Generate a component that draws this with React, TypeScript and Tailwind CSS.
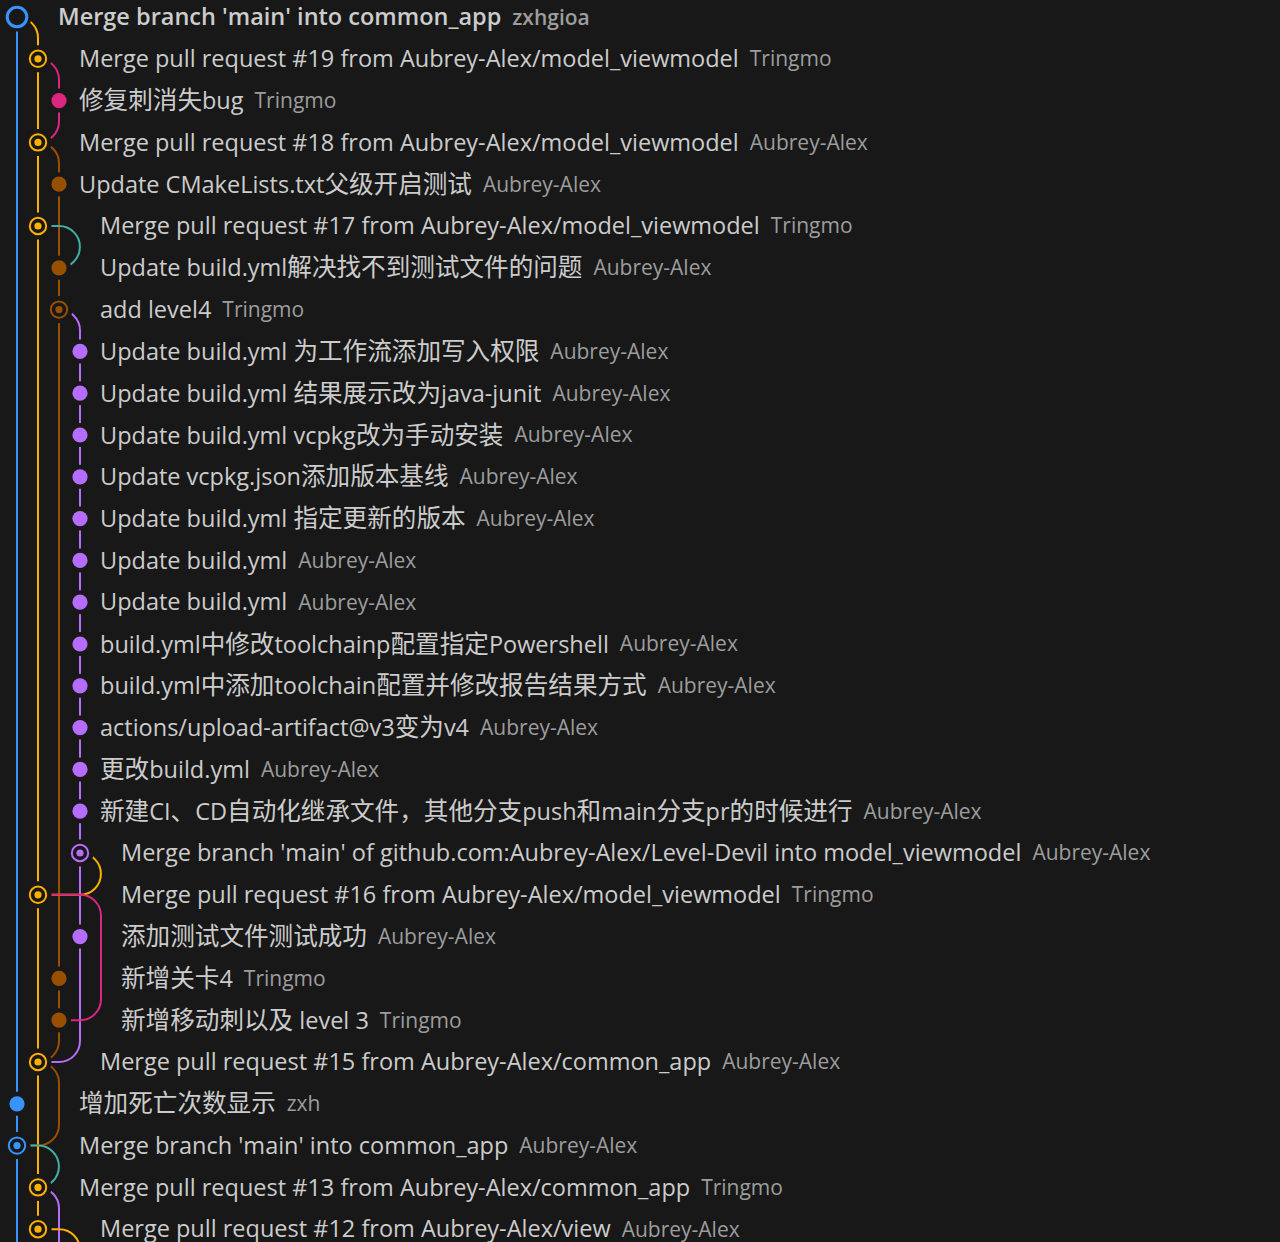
import React from "react";

const BG = "#181818";
const BLUE = "#3794ff";
const YEL = "#ffb000";
const PINK = "#dc267f";
const BROWN = "#994f00";
const TEAL = "#40b0a6";
const PURP = "#b66dff";

const RH = 41.8;
const Y = (i: number) => 17 + RH * i;
const L = [17, 38, 59, 80, 101];
const R = 20.9;

type Row = { msg: string; author: string; pad: number; bold?: boolean };

const rows: Row[] = [
  { msg: "Merge branch 'main' into common_app", author: "zxhgioa", pad: 2, bold: true },
  { msg: "Merge pull request #19 from Aubrey-Alex/model_viewmodel", author: "Tringmo", pad: 3 },
  { msg: "修复刺消失bug", author: "Tringmo", pad: 3 },
  { msg: "Merge pull request #18 from Aubrey-Alex/model_viewmodel", author: "Aubrey-Alex", pad: 3 },
  { msg: "Update CMakeLists.txt父级开启测试", author: "Aubrey-Alex", pad: 3 },
  { msg: "Merge pull request #17 from Aubrey-Alex/model_viewmodel", author: "Tringmo", pad: 4 },
  { msg: "Update build.yml解决找不到测试文件的问题", author: "Aubrey-Alex", pad: 4 },
  { msg: "add level4", author: "Tringmo", pad: 4 },
  { msg: "Update build.yml 为工作流添加写入权限", author: "Aubrey-Alex", pad: 4 },
  { msg: "Update build.yml 结果展示改为java-junit", author: "Aubrey-Alex", pad: 4 },
  { msg: "Update build.yml vcpkg改为手动安装", author: "Aubrey-Alex", pad: 4 },
  { msg: "Update vcpkg.json添加版本基线", author: "Aubrey-Alex", pad: 4 },
  { msg: "Update build.yml 指定更新的版本", author: "Aubrey-Alex", pad: 4 },
  { msg: "Update build.yml", author: "Aubrey-Alex", pad: 4 },
  { msg: "Update build.yml", author: "Aubrey-Alex", pad: 4 },
  { msg: "build.yml中修改toolchainp配置指定Powershell", author: "Aubrey-Alex", pad: 4 },
  { msg: "build.yml中添加toolchain配置并修改报告结果方式", author: "Aubrey-Alex", pad: 4 },
  { msg: "actions/upload-artifact@v3变为v4", author: "Aubrey-Alex", pad: 4 },
  { msg: "更改build.yml", author: "Aubrey-Alex", pad: 4 },
  { msg: "新建CI、CD自动化继承文件，其他分支push和main分支pr的时候进行", author: "Aubrey-Alex", pad: 4 },
  { msg: "Merge branch 'main' of github.com:Aubrey-Alex/Level-Devil into model_viewmodel", author: "Aubrey-Alex", pad: 5 },
  { msg: "Merge pull request #16 from Aubrey-Alex/model_viewmodel", author: "Tringmo", pad: 5 },
  { msg: "添加测试文件测试成功", author: "Aubrey-Alex", pad: 5 },
  { msg: "新增关卡4", author: "Tringmo", pad: 5 },
  { msg: "新增移动刺以及 level 3", author: "Tringmo", pad: 5 },
  { msg: "Merge pull request #15 from Aubrey-Alex/common_app", author: "Aubrey-Alex", pad: 4 },
  { msg: "增加死亡次数显示", author: "zxh", pad: 3 },
  { msg: "Merge branch 'main' into common_app", author: "Aubrey-Alex", pad: 3 },
  { msg: "Merge pull request #13 from Aubrey-Alex/common_app", author: "Tringmo", pad: 3 },
  { msg: "Merge pull request #12 from Aubrey-Alex/view", author: "Aubrey-Alex", pad: 4 },
];

const padClass: Record<number, string> = {
  2: "pl-[58px]",
  3: "pl-[79px]",
  4: "pl-[100px]",
  5: "pl-[121px]",
};

type Node = { row: number; lane: number; color: string; kind: "dot" | "merge" | "head" };

const nodes: Node[] = [
  { row: 0, lane: 0, color: BLUE, kind: "head" },
  { row: 1, lane: 1, color: YEL, kind: "merge" },
  { row: 2, lane: 2, color: PINK, kind: "dot" },
  { row: 3, lane: 1, color: YEL, kind: "merge" },
  { row: 4, lane: 2, color: BROWN, kind: "dot" },
  { row: 5, lane: 1, color: YEL, kind: "merge" },
  { row: 6, lane: 2, color: BROWN, kind: "dot" },
  { row: 7, lane: 2, color: BROWN, kind: "merge" },
  ...[8, 9, 10, 11, 12, 13, 14, 15, 16, 17, 18, 19].map(
    (r): Node => ({ row: r, lane: 3, color: PURP, kind: "dot" })
  ),
  { row: 20, lane: 3, color: PURP, kind: "merge" },
  { row: 21, lane: 1, color: YEL, kind: "merge" },
  { row: 22, lane: 3, color: PURP, kind: "dot" },
  { row: 23, lane: 2, color: BROWN, kind: "dot" },
  { row: 24, lane: 2, color: BROWN, kind: "dot" },
  { row: 25, lane: 1, color: YEL, kind: "merge" },
  { row: 26, lane: 0, color: BLUE, kind: "dot" },
  { row: 27, lane: 0, color: BLUE, kind: "merge" },
  { row: 28, lane: 1, color: YEL, kind: "merge" },
  { row: 29, lane: 1, color: YEL, kind: "merge" },
];

const paths: { d: string; c: string }[] = [
  { d: `M17 17 V1260`, c: BLUE },
  { d: `M17 17 A${R} ${R} 0 0 1 38 ${17 + R} V1260`, c: YEL },
  {
    d: `M38 ${Y(3)} A${R} ${R} 0 0 1 59 ${Y(3) + R} V${Y(25) - R} A${R} ${R} 0 0 1 38 ${Y(25)}`,
    c: BROWN,
  },
  {
    d: `M59 ${Y(7)} A${R} ${R} 0 0 1 80 ${Y(7) + R} V${Y(25) - R} A${R} ${R} 0 0 1 59 ${Y(25)} H38`,
    c: PURP,
  },
  {
    d: `M38 ${Y(1)} A${R} ${R} 0 0 1 59 ${Y(1) + R} V${Y(3) - R} A${R} ${R} 0 0 1 38 ${Y(3)}`,
    c: PINK,
  },
  { d: `M38 ${Y(5)} H59 A${R} ${R} 0 0 1 59 ${Y(6)}`, c: TEAL },
  { d: `M80 ${Y(20)} A${R} ${R} 0 0 1 80 ${Y(21)} H38`, c: YEL },
  {
    d: `M38 ${Y(21)} H80 A${R} ${R} 0 0 1 101 ${Y(21) + R} V${Y(24) - R} A${R} ${R} 0 0 1 80 ${Y(24)} H59`,
    c: PINK,
  },
  {
    d: `M38 ${Y(25)} A${R} ${R} 0 0 1 59 ${Y(25) + R} V${Y(27) - R} A${R} ${R} 0 0 1 38 ${Y(27)} H17`,
    c: BROWN,
  },
  { d: `M17 ${Y(27)} H38 A${R} ${R} 0 0 1 38 ${Y(28)}`, c: TEAL },
  { d: `M38 ${Y(28)} A${R} ${R} 0 0 1 59 ${Y(28) + R} V1260`, c: PURP },
  { d: `M38 ${Y(29)} H59 A${R} ${R} 0 0 1 80 ${Y(29) + R} V1260`, c: YEL },
];

function Graph() {
  return (
    <svg
      className="absolute left-0 top-0 pointer-events-none"
      width={140}
      height={1260}
      viewBox="0 0 140 1260"
    >
      {paths.map((p, i) => (
        <path key={i} d={p.d} stroke={p.c} strokeWidth={2} fill="none" />
      ))}
      {nodes.map((n, i) => {
        const cx = L[n.lane];
        const cy = Y(n.row);
        if (n.kind === "head") {
          return (
            <g key={i}>
              <circle cx={cx} cy={cy} r={14.5} fill={BG} />
              <circle cx={cx} cy={cy} r={9.8} fill={BG} stroke={n.color} strokeWidth={3} />
            </g>
          );
        }
        if (n.kind === "merge") {
          return (
            <g key={i}>
              <circle cx={cx} cy={cy} r={13.5} fill={BG} />
              <circle cx={cx} cy={cy} r={8.2} fill={BG} stroke={n.color} strokeWidth={2} />
              <circle cx={cx} cy={cy} r={3.6} fill={n.color} />
            </g>
          );
        }
        return (
          <g key={i}>
            <circle cx={cx} cy={cy} r={12} fill={BG} />
            <circle cx={cx} cy={cy} r={7.6} fill={n.color} />
          </g>
        );
      })}
    </svg>
  );
}

const CJK = /([\u3000-\u303f\u4e00-\u9fff\uff00-\uffef]+)/;

function Message({ text }: { text: string }) {
  const parts = text.split(CJK).filter((p) => p.length > 0);
  return (
    <>
      {parts.map((p, i) =>
        CJK.test(p) ? (
          <span key={i} className="text-[24.6px]">
            {p}
          </span>
        ) : (
          <span key={i}>{p}</span>
        )
      )}
    </>
  );
}

export default function App() {
  return (
    <div
      className="relative w-[1280px] h-[1242px] overflow-hidden bg-[#181818]"
      style={{ fontFamily: '"Open Sans", "Noto Sans CJK SC", sans-serif' }}
    >
      <Graph />
      <div className="-mt-[3.9px] flex flex-col">
        {rows.map((r, i) => (
          <div
            key={i}
            className={`flex h-[41.8px] items-center whitespace-nowrap ${padClass[r.pad]}`}
          >
            <span
              className={`text-[23.5px] leading-none text-[#cccccc] ${r.bold ? "font-semibold" : ""}`}
            >
              <Message text={r.msg} />
            </span>
            <span
              className={`ml-[11px] text-[21px] leading-none text-[#9d9d9d] ${r.bold ? "font-semibold" : ""}`}
            >
              {r.author}
            </span>
          </div>
        ))}
      </div>
    </div>
  );
}
